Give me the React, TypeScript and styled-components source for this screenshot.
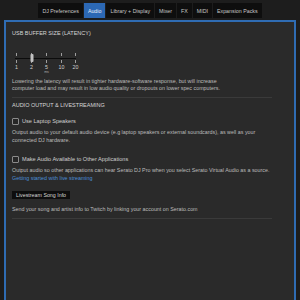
import React from "react";
import styled, { createGlobalStyle } from "styled-components";

const Global = createGlobalStyle`
  html, body { margin: 0; padding: 0; background: #1d1d1d; }
  body { font-family: "Liberation Sans", Arial, sans-serif; width: 300px; height: 300px; overflow: hidden; }
`;

const Page = styled.div`
  width: 300px;
  height: 300px;
  background: #1d1d1d;
  display: flex;
  flex-direction: column;
  padding-top: 3px;
  box-sizing: border-box;
`;

const TabBar = styled.div`
  display: flex;
  justify-content: center;
  gap: 1px;
  height: 15px;
`;

const Tab = styled.div<{ $active?: boolean }>`
  height: 15px;
  padding: 0 4px;
  display: flex;
  align-items: center;
  font-size: 5.3px;
  color: ${(p) => (p.$active ? "#e8eef8" : "#c8c8c8")};
  background: ${(p) => (p.$active ? "#2c68b4" : "#0e0e0e")};
  white-space: nowrap;
`;

const Panel = styled.div`
  margin: 2px 4px 0 4px;
  flex: 1;
  border: 2px solid #2f6cb3;
  border-bottom: none;
  background: #2a2a2a;
  padding: 0 6px;
  color: #bdbdbd;
`;

const Header = styled.div<{ $top: number }>`
  margin-top: ${(p) => p.$top}px;
  font-size: 5.5px;
  line-height: 8px;
  color: #d6d6d6;
  text-transform: uppercase;
  white-space: nowrap;
`;

const Desc = styled.div<{ $top: number; $lh: number }>`
  margin-top: ${(p) => p.$top}px;
  font-size: 5.35px;
  line-height: ${(p) => p.$lh}px;
  color: #bcbcbc;
  white-space: nowrap;
`;

const Link = styled.div`
  color: #4a8fd8;
`;

const Separator = styled.div<{ $top: number }>`
  margin-top: ${(p) => p.$top}px;
  width: 260px;
  height: 1px;
  background: #3a3a3a;
`;

const CheckRow = styled.div<{ $top: number }>`
  margin-top: ${(p) => p.$top}px;
  display: flex;
  align-items: center;
  gap: 3px;
  height: 8px;
  font-size: 5.6px;
  color: #cfcfcf;
`;

const Box = styled.span`
  width: 5px;
  height: 5px;
  border: 1px solid #8a8a8a;
  border-radius: 1px;
  background: #262626;
`;

const Button = styled.div<{ $top: number }>`
  margin-top: ${(p) => p.$top}px;
  display: inline-flex;
  align-items: center;
  height: 8px;
  padding: 0 4px;
  background: #0d0d0d;
  font-size: 5.3px;
  color: #d6d6d6;
`;

const SliderWrap = styled.div`
  position: relative;
  margin-top: 13px;
  width: 80px;
  height: 26px;
`;

const SliderLabel = styled.span`
  position: absolute;
  top: 14px;
  transform: translateX(-50%);
  font-size: 5.3px;
  line-height: 6px;
  color: #d0d0d0;
`;

const Unit = styled.span`
  position: absolute;
  top: 20px;
  transform: translateX(-50%);
  font-size: 3.5px;
  line-height: 4px;
  color: #aaa;
`;

const Thumb = styled.div`
  position: absolute;
  top: 4px;
  width: 3px;
  height: 8px;
  border-radius: 1px;
  background: #c2c2c2;
  transform: translateX(-50%);
`;

const ticks = [
  { v: "1", x: 4 },
  { v: "2", x: 19 },
  { v: "5", x: 34 },
  { v: "10", x: 49 },
  { v: "20", x: 63 },
];

function Slider() {
  return (
    <SliderWrap>
      <svg width="80" height="14" style={{ position: "absolute", left: 0, top: 0 }}>
        <line x1="3" y1="8.5" x2="64" y2="8.5" stroke="#0c0c0c" strokeWidth="1.2" />
        {ticks.map((t) => (
          <g key={t.v}>
            <line x1={t.x + 0.5} y1="3" x2={t.x + 0.5} y2="6" stroke="#bdbdbd" strokeWidth="0.8" />
            <line x1={t.x + 0.5} y1="10" x2={t.x + 0.5} y2="13" stroke="#bdbdbd" strokeWidth="0.8" />
          </g>
        ))}
      </svg>
      <Thumb style={{ left: 19.5 }} />
      {ticks.map((t) => (
        <SliderLabel key={t.v} style={{ left: t.x + 0.5 }}>
          {t.v}
        </SliderLabel>
      ))}
      <Unit style={{ left: 34.5 }}>ms</Unit>
    </SliderWrap>
  );
}

export default function App() {
  const tabs = ["DJ Preferences", "Audio", "Library + Display", "Mixer", "FX", "MIDI", "Expansion Packs"];
  return (
    <>
      <Global />
      <Page>
        <TabBar>
          {tabs.map((t) => (
            <Tab key={t} $active={t === "Audio"}>
              {t}
            </Tab>
          ))}
        </TabBar>
        <Panel>
          <Header $top={7}>USB Buffer Size (Latency)</Header>
          <Slider />
          <Desc $top={2} $lh={7}>
            Lowering the latency will result in tighter hardware-software response, but will increase
            <br />
            computer load and may result in low audio quality or dropouts on lower spec computers.
          </Desc>
          <Separator $top={5} />
          <Header $top={3}>Audio Output &amp; Livestreaming</Header>
          <CheckRow $top={8}>
            <Box />
            Use Laptop Speakers
          </CheckRow>
          <Desc $top={3} $lh={8}>
            Output audio to your default audio device (e.g laptop speakers or external soundcards), as well as your
            <br />
            connected DJ hardware.
          </Desc>
          <CheckRow $top={11}>
            <Box />
            Make Audio Available to Other Applications
          </CheckRow>
          <Desc $top={2.5} $lh={8}>
            Output audio so other applications can hear Serato DJ Pro when you select Serato Virtual Audio as a source.
            <Link>Getting started with live streaming</Link>
          </Desc>
          <div>
            <Button $top={9}>Livestream Song Info</Button>
          </div>
          <Desc $top={4} $lh={8}>
            Send your song and artist info to Twitch by linking your account on Serato.com
          </Desc>
          <Separator $top={5} />
        </Panel>
      </Page>
    </>
  );
}
